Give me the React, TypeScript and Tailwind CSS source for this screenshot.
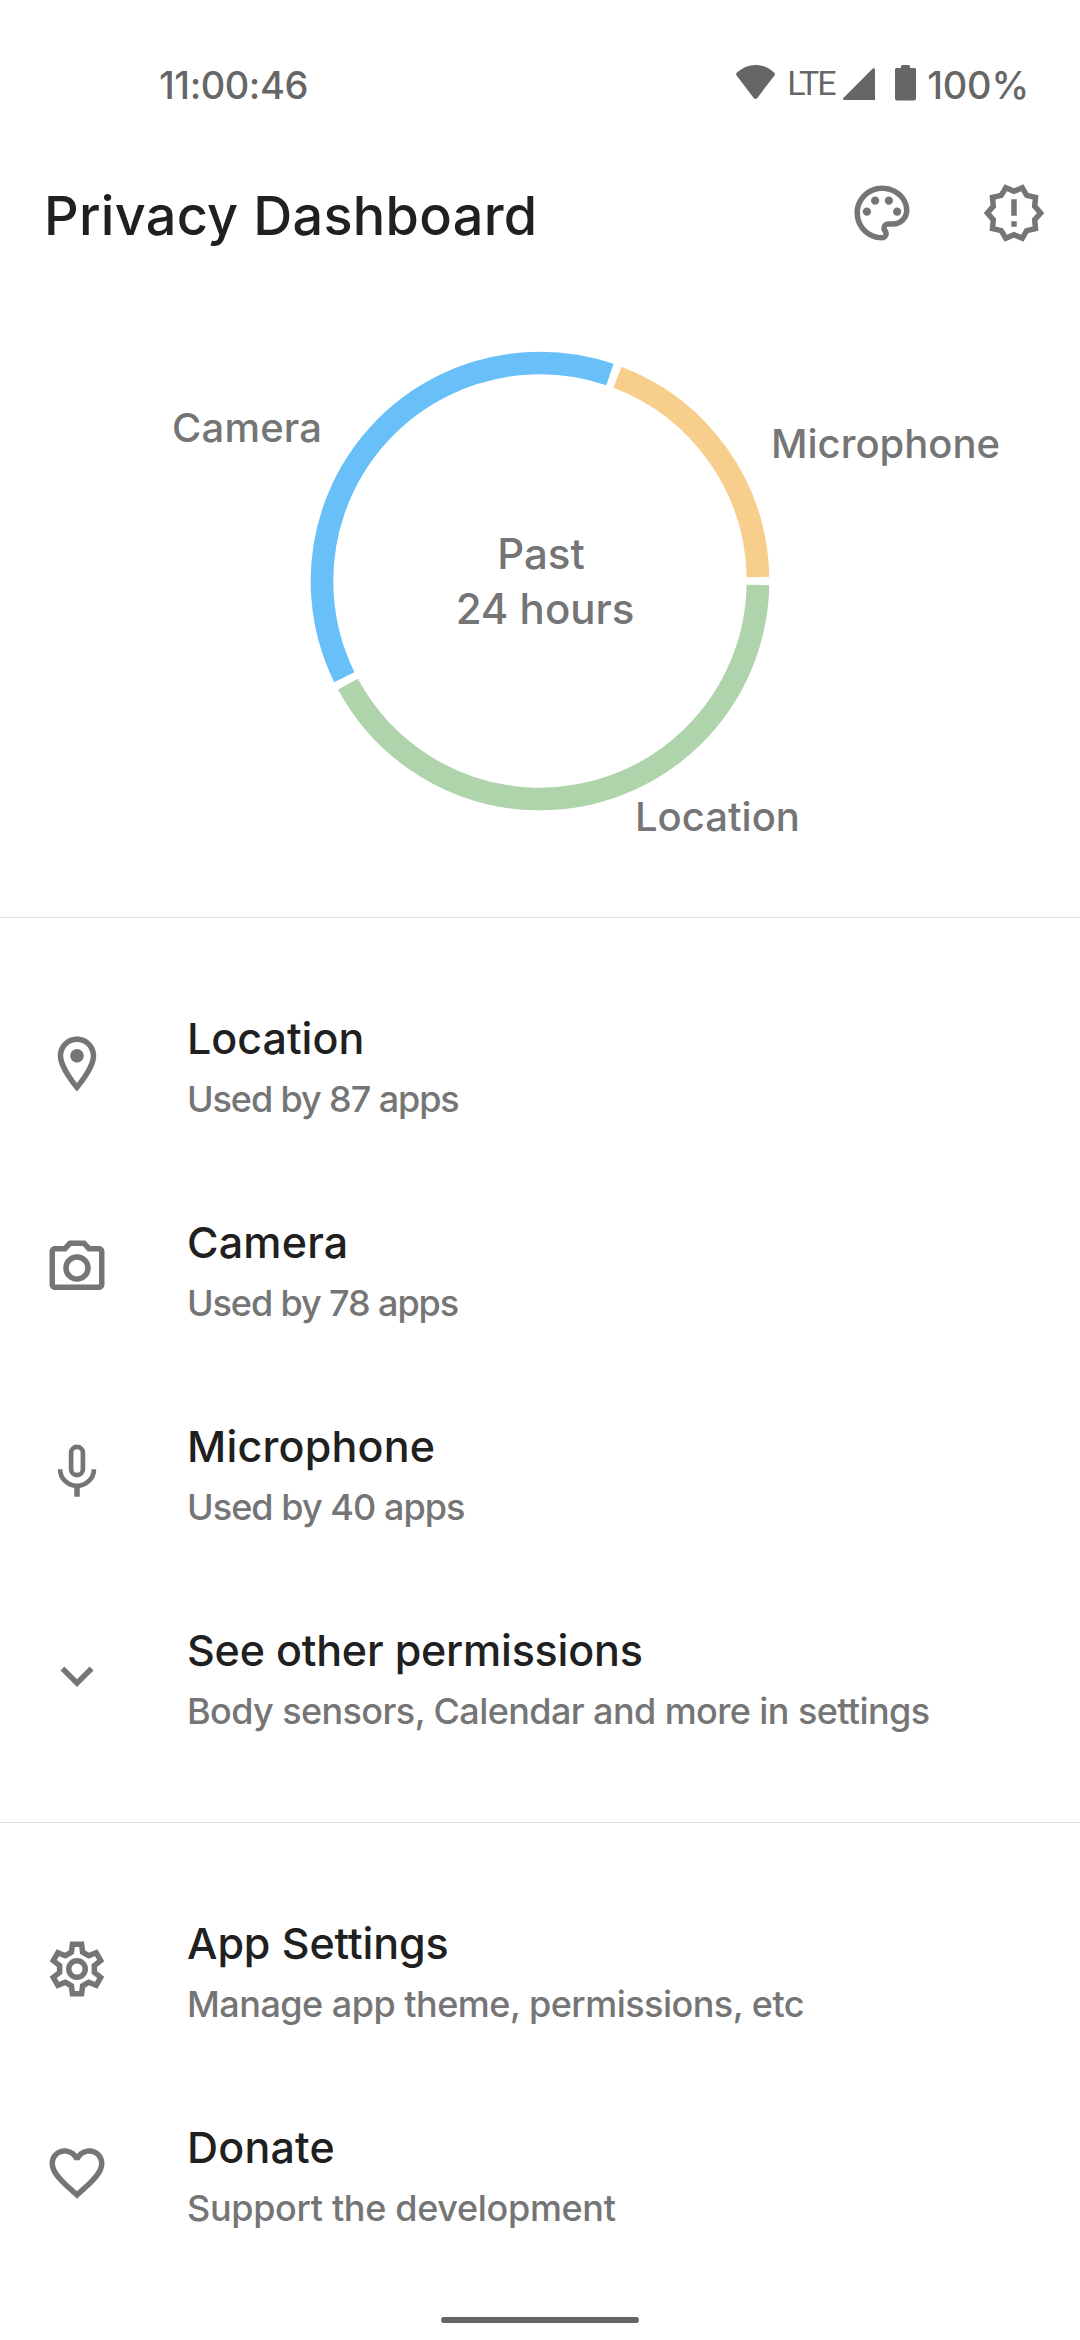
import type { ReactNode } from 'react';
import {
  MdExpandMore,
  MdFavoriteBorder,
  MdOutlineLocationOn,
  MdOutlineNewReleases,
  MdOutlinePalette,
  MdOutlinePhotoCamera,
} from 'react-icons/md';

const usage = [
  { name: 'Location', apps: 87, color: '#afd4ac' },
  { name: 'Camera', apps: 78, color: '#69c0f9' },
  { name: 'Microphone', apps: 40, color: '#f7ce8c' },
];

function StatusBar() {
  return (
    <div className="h-[128px] pt-[60px] pl-[159px] pr-[51px] flex items-start text-[#666666]">
      <span className="text-[38px] leading-[50px] font-medium tracking-[-0.45px]">11:00:46</span>
      <div className="ml-auto flex items-start">
        <svg className="mt-[5px] w-[39px] h-[34px]" viewBox="0 0 39 34" fill="currentColor">
          <path d="M1 7.5C6 3 12.500 0 19.500 0S33 3 38 7.500c1 .9 1.200 2 .4 3L21.300 33a2.300 2.300 0 0 1-3.600 0L.6 10.500c-.8-1-.6-2.100.4-3z" />
        </svg>
        <span className="ml-[12px] w-[49px] font-[Roboto] text-[34px] leading-[46px] tracking-[-2px]">LTE</span>
        <svg className="ml-[7px] mt-[8px] w-[32px] h-[32px]" viewBox="0 0 32 32" fill="currentColor">
          <path d="M32 1.600V32H1.200C0 32 -.4 30.800.4 29.900L29.500.7C30.500-.3 32 .2 32 1.600z" />
        </svg>
        <svg className="ml-[20px] mt-[5px] w-[21px] h-[36px]" viewBox="0 0 21 36" fill="currentColor">
          <path d="M7.500 0h6a1.500 1.500 0 0 1 1.500 1.500V3h4.500A1.500 1.500 0 0 1 21 4.500v29a2 2 0 0 1-2 2H2a2 2 0 0 1-2-2v-29A1.500 1.500 0 0 1 1.500 3H6V1.500A1.500 1.500 0 0 1 7.500 0z" />
        </svg>
        <span className="ml-[11px] text-[38px] leading-[50px] font-medium tracking-[-0.2px]">100%</span>
      </div>
    </div>
  );
}

function Header() {
  return (
    <header className="h-[170px] pt-[52px] pl-[44px] pr-[33px] flex items-start">
      <h1 className="text-[54px] leading-[72px] font-medium tracking-[0.3px] text-[#202020]">Privacy Dashboard</h1>
      <div className="ml-auto flex gap-[66px] text-[#757575]">
        <MdOutlinePalette size={66} />
        <MdOutlineNewReleases size={66} />
      </div>
    </header>
  );
}

function UsageChart() {
  const total = usage.reduce((sum, u) => sum + u.apps, 0);
  const radius = 218;
  const gap = 2.1;
  let start = 0;

  return (
    <section className="relative h-[619px] pt-[53px] flex justify-center text-[#757575] font-medium">
      <svg className="w-[460px] h-[460px]" viewBox="-230 -230 460 460" fill="none">
        {usage.map((u) => {
          const sweep = (u.apps / total) * 360;
          const from = start + gap / 2;
          start += sweep;
          return (
            <circle
              key={u.name}
              r={radius}
              stroke={u.color}
              strokeWidth={22.6}
              pathLength={360}
              strokeDasharray={`${sweep - gap} ${360 - sweep + gap}`}
              transform={`rotate(${from})`}
            />
          );
        })}
      </svg>
      <p className="absolute top-[228px] left-[445px] w-[200px] text-center text-[42px] leading-[55px]">
        <span className="mr-2">Past</span>
        <br />
        24 hours
      </p>
      {/* Slice labels */}
      <span className="absolute top-[105px] left-[172px] text-[40px] leading-[50px] tracking-[0.2px]">Camera</span>
      <span className="absolute top-[121px] left-[771px] text-[40px] leading-[50px]">Microphone</span>
      <span className="absolute top-[494px] left-[635px] text-[40px] leading-[50px]">Location</span>
    </section>
  );
}

interface RowProps {
  icon: ReactNode;
  title: string;
  subtitle: string;
  titleClass?: string;
  subtitleClass?: string;
}

function Row({ icon, title, subtitle, titleClass = '', subtitleClass = '' }: RowProps) {
  return (
    <div className="h-[204px] pl-[44px] flex items-center">
      <div className="w-[66px] text-[#757575]">{icon}</div>
      <div className="ml-[77px] pt-[6px] font-medium whitespace-nowrap">
        <h2 className={`text-[43px] leading-[64px] text-[#202020] ${titleClass}`}>{title}</h2>
        <p className={`text-[36px] leading-[59px] text-[#757575] ${subtitleClass}`}>{subtitle}</p>
      </div>
    </div>
  );
}

function MicIcon() {
  return (
    <svg width="66" height="66" viewBox="0 0 24 24" fill="none" stroke="currentColor">
      <rect x="9.85" y="2.85" width="4.300" height="10.300" rx="2.150" strokeWidth="1.700" />
      <path d="M5.850 11a6.150 6.020 0 0 0 12.300 0" strokeWidth="1.700" />
      <path d="M12 17v4" strokeWidth="2" />
    </svg>
  );
}

function GearIcon() {
  return (
    <svg width="66" height="66" viewBox="0 0 24 24" fill="none" stroke="currentColor" strokeWidth="2">
      <path d="M13.650 3l.4 2.900 2.210 1.270 2.710-1.100 1.650 2.860-2.310 1.800v2.540l2.310 1.800-1.650 2.860-2.710-1.100-2.210 1.270-.4 2.900h-3.300l-.4-2.900-2.210-1.270-2.710 1.100-1.650-2.860 2.310-1.800v-2.540l-2.310-1.800 1.650-2.860 2.710 1.100 2.210-1.270.4-2.900z" />
      <circle cx="12" cy="12" r="3" />
    </svg>
  );
}

export default function App() {
  return (
    <div className="w-[1080px] h-[2340px] bg-white flex flex-col overflow-hidden font-[Inter,sans-serif]">
      <StatusBar />
      <Header />
      <UsageChart />
      <div className="h-px bg-[#e0e0e0]" />

      <div className="pt-[44px] h-[904px]">
        <Row
          icon={<MdOutlineLocationOn size={66} />}
          title="Location"
          subtitle="Used by 87 apps"
          subtitleClass="tracking-[-1.1px]"
        />
        <Row
          icon={<MdOutlinePhotoCamera size={66} />}
          title="Camera"
          subtitle="Used by 78 apps"
          titleClass="tracking-[0.2px]"
          subtitleClass="tracking-[-1.1px]"
        />
        <Row
          icon={<MicIcon />}
          title="Microphone"
          subtitle="Used by 40 apps"
          titleClass="tracking-[0.2px]"
          subtitleClass="tracking-[-0.95px]"
        />
        <Row
          icon={<MdExpandMore size={66} />}
          title="See other permissions"
          subtitle="Body sensors, Calendar and more in settings"
          titleClass="tracking-[-0.2px]"
          subtitleClass="tracking-[-0.6px]"
        />
      </div>
      <div className="h-px bg-[#e0e0e0]" />

      <div className="pt-[44px]">
        <Row
          icon={<GearIcon />}
          title="App Settings"
          subtitle="Manage app theme, permissions, etc"
          titleClass="tracking-[-0.1px]"
          subtitleClass="tracking-[-0.52px]"
        />
        <Row
          icon={<MdFavoriteBorder size={66} />}
          title="Donate"
          subtitle="Support the development"
          titleClass="tracking-[0.2px]"
          subtitleClass="tracking-[-0.33px]"
        />
      </div>

      {/* Gesture bar */}
      <div className="mt-auto mb-[17px] mx-auto w-[198px] h-[6px] rounded-full bg-[#666666]" />
    </div>
  );
}
